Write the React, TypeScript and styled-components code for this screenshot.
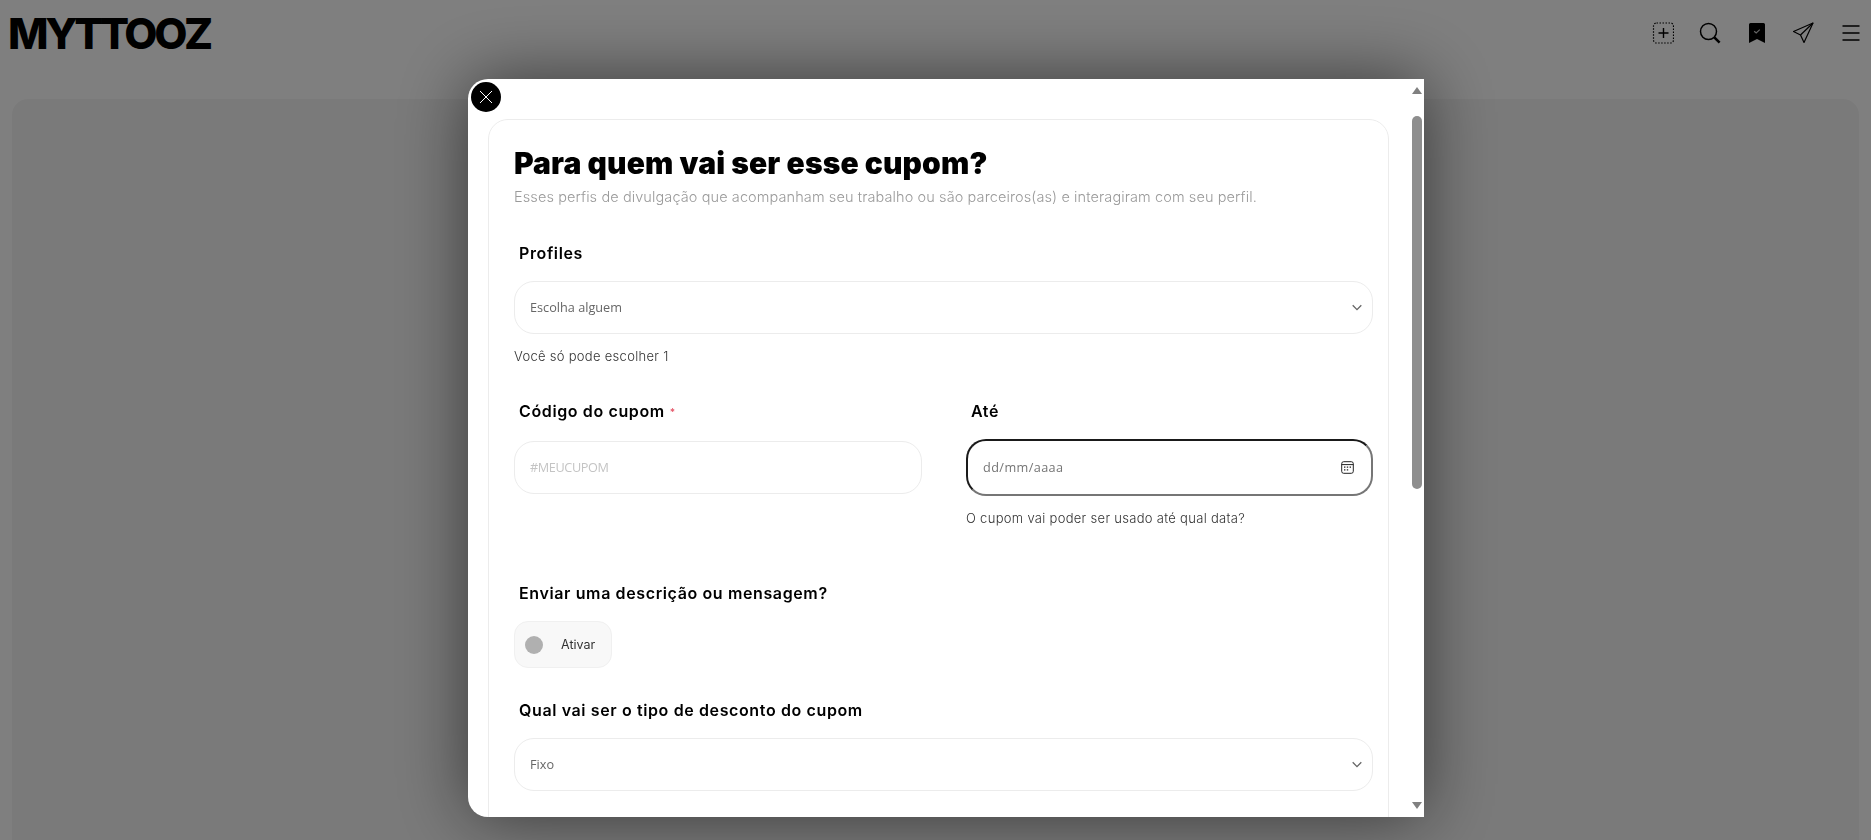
import React from 'react';
import styled, { createGlobalStyle } from 'styled-components';

const GlobalStyle = createGlobalStyle`
  html, body {
    margin: 0;
    height: 100%;
    background: #fff;
    font-family: Inter, "Liberation Sans", sans-serif;
    overflow: hidden;
  }
`;

const Page = styled.div`
  display: flex;
  flex-direction: column;
  height: 840px;
`;

const Header = styled.header`
  display: flex;
  align-items: center;
  justify-content: space-between;
  height: 66px;
  padding: 0 7px 0 8px;
  flex: none;
`;

const Logo = styled.div`
  font-size: 43px;
  line-height: 1;
  font-weight: 800;
  letter-spacing: -3.4px;
  color: #000;
`;

const IconRow = styled.nav`
  display: flex;
  gap: 21px;
`;

const IconButton = styled.span`
  display: flex;
  align-items: center;
  justify-content: center;
  width: 26px;
  height: 26px;
`;

const Panel = styled.main`
  flex: 1;
  margin: 33px 12px 0;
  background: #f5f5f5;
  border-radius: 16px 16px 0 0;
`;

const Overlay = styled.div`
  position: fixed;
  inset: 0;
  display: flex;
  justify-content: center;
  align-items: flex-start;
  padding: 79px 0 0 21px;
  background: rgba(0, 0, 0, 0.5);
`;

const Modal = styled.section`
  position: relative;
  display: flex;
  width: 956px;
  height: 738px;
  overflow: hidden;
  background: #fff;
  border-radius: 20px 0 0 20px;
  box-shadow: 0 0 70px rgba(0, 0, 0, 0.55);
`;

const CloseButton = styled.button`
  position: absolute;
  top: 3px;
  left: 3px;
  display: flex;
  align-items: center;
  justify-content: center;
  width: 30px;
  height: 30px;
  padding: 0;
  border: none;
  border-radius: 50%;
  background: #000;
`;

const ScrollArea = styled.div`
  flex: 1;
  overflow: hidden;
`;

const Card = styled.div`
  box-sizing: border-box;
  width: 901px;
  height: 760px;
  margin: 40px 0 0 20px;
  padding: 25px 15px 0 25px;
  border: 1px solid #ececec;
  border-radius: 20px;
`;

const Title = styled.h1`
  margin: 0;
  font-size: 30px;
  line-height: 36px;
  font-weight: 900;
  letter-spacing: 0.12px;
  color: #000;
`;

const Subtitle = styled.p`
  margin: 6px 0 0;
  font-size: 14.5px;
  line-height: 20px;
  font-weight: 300;
  letter-spacing: 0.1px;
  color: #9a9a9a;
`;

const Label = styled.label<{ $top?: number }>`
  display: block;
  margin-top: ${p => p.$top ?? 36}px;
  padding-left: 5px;
  font-size: 16px;
  line-height: 20px;
  font-weight: 600;
  letter-spacing: 0.62px;
  color: #000;
`;

const Required = styled.span`
  margin-left: 5px;
  font-size: 10px;
  color: #e5596b;
  vertical-align: 1px;
`;

const Field = styled.div`
  box-sizing: border-box;
  display: flex;
  align-items: center;
  justify-content: space-between;
  height: 53px;
  margin-top: 18px;
  padding: 0 10px 1px 15px;
  border: 1px solid #ececec;
  border-radius: 20px;
  font-family: "Open Sans", sans-serif;
  font-size: 12.7px;
  color: #666;
`;

const CodeInput = styled.input`
  box-sizing: border-box;
  display: block;
  width: 100%;
  height: 53px;
  margin-top: 19px;
  padding: 0 15px 2px;
  border: 1px solid #ececec;
  border-radius: 20px;
  outline: none;
  font-family: "Open Sans", sans-serif;
  font-size: 12.7px;

  &::placeholder {
    color: #c4c4c4;
    letter-spacing: -0.4px;
  }
`;

const DateField = styled(Field)`
  height: 57px;
  padding: 0 17px 1px 15px;
  border: 2px solid;
  border-color: #1a1a1a #767676 #767676 #1a1a1a;
  color: #757575;
  letter-spacing: 0.4px;
`;

const Help = styled.p<{ $top?: number }>`
  margin: ${p => p.$top ?? 13}px 0 0;
  font-size: 13px;
  line-height: 18px;
  font-weight: 300;
  letter-spacing: 0.3px;
  color: #333;
`;

const TwoColumns = styled.div`
  display: grid;
  grid-template-columns: 408px 407px;
  column-gap: 44px;
`;

const Toggle = styled.div`
  box-sizing: border-box;
  display: flex;
  align-items: center;
  gap: 18px;
  width: 98px;
  height: 47px;
  margin-top: 18px;
  padding-left: 10px;
  border: 1px solid #f0f0f0;
  border-radius: 14px;
  background: #f8f8f8;
  font-size: 12.5px;
  color: #333;
`;

const Knob = styled.span`
  width: 18px;
  height: 18px;
  border-radius: 50%;
  background: #b0b0b0;
`;

const Rail = styled.div`
  display: flex;
  flex-direction: column;
  flex: none;
  width: 10px;
  margin-right: 2px;
  padding: 8px 0;
  box-sizing: border-box;
`;

const Arrow = styled.span<{ $down?: boolean }>`
  width: 0;
  height: 0;
  border-left: 5px solid transparent;
  border-right: 5px solid transparent;
  ${p => (p.$down ? 'border-top: 7px solid #808080; margin-top: auto;' : 'border-bottom: 7px solid #808080;')}
`;

const Thumb = styled.div`
  height: 373px;
  margin-top: 22px;
  border-radius: 5px;
  background: #8e8e8e;
`;

const Chevron = () => (
  <svg width="10" height="7" viewBox="0 0 10 7" fill="none" stroke="#666" strokeWidth="1.3">
    <path d="M0.7 1.2 5 5.6 9.3 1.2" />
  </svg>
);

const CalendarIcon = () => (
  <svg width="13" height="13" viewBox="0 0 13 13" fill="none" stroke="#222" strokeWidth="1">
    <rect x="0.7" y="0.7" width="11.6" height="11.6" rx="2" />
    <path d="M0.7 3.6h11.6" />
    <path d="M3 6.2h1.4M5.8 6.2h1.4M8.6 6.2h1.4M3 8.8h1.4M5.8 8.8h1.4" strokeWidth="1.3" />
  </svg>
);

export default function App() {
  return (
    <>
      <GlobalStyle />
      <Page>
        <Header>
          <Logo>MYTTOOZ</Logo>
          <IconRow>
            <IconButton>
              <svg width="22" height="22" viewBox="0 0 22 22" fill="none" stroke="#000">
                <rect x="1.5" y="1" width="20" height="20" rx="3" strokeWidth="1.2" strokeDasharray="1.5 1.5" />
                <path d="M11.5 6v10M6.5 11h10" strokeWidth="1.4" />
              </svg>
            </IconButton>
            <IconButton>
              <svg width="22" height="22" viewBox="0 0 22 22" fill="none" stroke="#000">
                <circle cx="9.5" cy="9.5" r="8" strokeWidth="1.5" />
                <path d="M15.3 15.3 20.6 20.6" strokeWidth="2.6" />
              </svg>
            </IconButton>
            <IconButton>
              <svg width="18" height="22" viewBox="0 0 18 22">
                <path d="M1 2.5A1.5 1.5 0 0 1 2.5 1h13A1.5 1.5 0 0 1 17 2.5V21l-8-4-8 4z" fill="#000" />
                <path d="M6.2 9.2 8.2 11 11.8 7.6" fill="none" stroke="#ccc" strokeWidth="1.2" />
              </svg>
            </IconButton>
            <IconButton>
              <svg width="22" height="22" viewBox="0 0 22 22" fill="none" stroke="#000" strokeWidth="1.2" strokeLinejoin="round">
                <path d="M20 1 0.5 9.5 7.5 13 11 20.5z" />
                <path d="M20 1 7.5 13" />
              </svg>
            </IconButton>
            <IconButton>
              <svg width="18" height="16" viewBox="0 0 18 16" stroke="#000" strokeWidth="1.6">
                <path d="M0.5 1h17M0.5 8h17M0.5 15h17" />
              </svg>
            </IconButton>
          </IconRow>
        </Header>
        <Panel />
      </Page>
      <Overlay>
        <Modal>
          <CloseButton aria-label="Fechar">
            <svg width="14" height="14" viewBox="0 0 14 14" stroke="#fff" strokeWidth="1">
              <path d="M1 1 13 13M13 1 1 13" />
            </svg>
          </CloseButton>
          <ScrollArea>
            <Card>
              <Title>Para quem vai ser esse cupom?</Title>
              <Subtitle>
                Esses perfis de divulgação que acompanham seu trabalho ou são parceiros(as) e interagiram com seu perfil.
              </Subtitle>

              <Label>Profiles</Label>
              <Field>
                Escolha alguem
                <Chevron />
              </Field>
              <Help>Você só pode escolher 1</Help>

              <TwoColumns>
                <div>
                  <Label>
                    Código do cupom<Required>*</Required>
                  </Label>
                  <CodeInput placeholder="#MEUCUPOM" />
                </div>
                <div>
                  <Label>Até</Label>
                  <DateField>
                    dd/mm/aaaa
                    <CalendarIcon />
                  </DateField>
                  <Help>O cupom vai poder ser usado até qual data?</Help>
                </div>
              </TwoColumns>

              <Label $top={56}>Enviar uma descrição ou mensagem?</Label>
              <Toggle>
                <Knob />
                Ativar
              </Toggle>

              <Label $top={32}>Qual vai ser o tipo de desconto do cupom</Label>
              <Field>
                Fixo
                <Chevron />
              </Field>
            </Card>
          </ScrollArea>
          <Rail>
            <Arrow />
            <Thumb />
            <Arrow $down />
          </Rail>
        </Modal>
      </Overlay>
    </>
  );
}
